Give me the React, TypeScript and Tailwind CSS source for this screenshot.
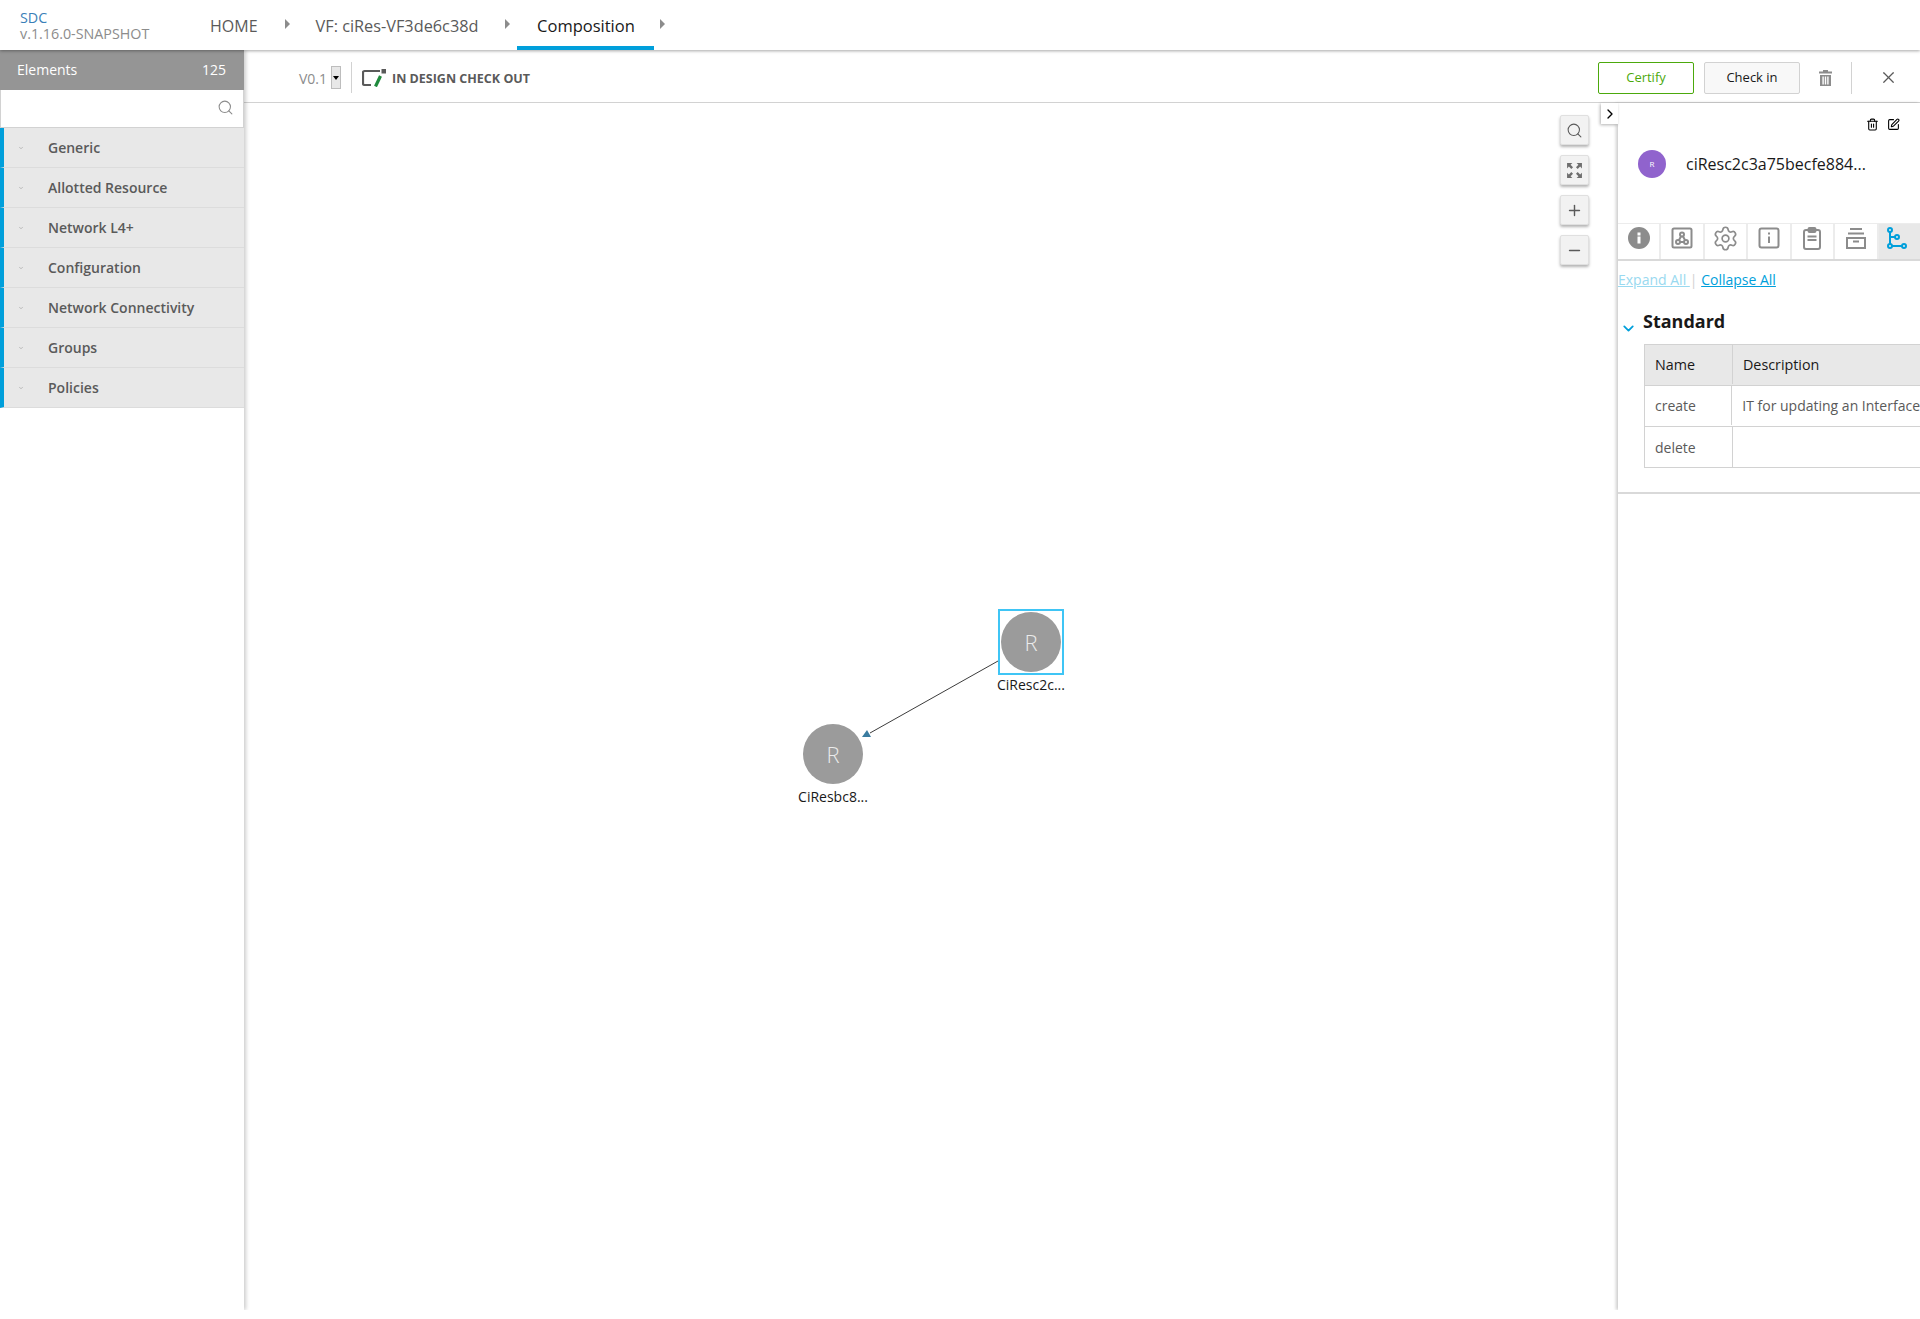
import { ChevronDown, ChevronRight, Minus, Plus, Search, Settings, SquarePen, Trash2, X } from 'lucide-react';

const categories = ['Generic', 'Allotted Resource', 'Network L4+', 'Configuration', 'Network Connectivity', 'Groups', 'Policies'];

function Crumb({ label, className }: { label: string; className: string }) {
  return (
    <div className="flex h-full items-center gap-[27px]">
      <span className={`pt-[2px] text-[#5a5a5a] ${className}`}>{label}</span>
      <span className="mb-[2px] h-0 w-0 border-y-[5px] border-l-[5px] border-y-transparent border-l-[#8c8c8c]" />
    </div>
  );
}

function ZoomButton({ children }: { children: React.ReactNode }) {
  return (
    <div className="flex h-[30px] w-[29px] items-center justify-center rounded-[2px] border border-[#e0e0e0] bg-[#f2f2f2] text-[#5a5a5a] shadow-[0_2px_3px_rgba(0,0,0,0.3)]">
      {children}
    </div>
  );
}

function Node({ label, selected }: { label: string; selected?: boolean }) {
  return (
    <div className="flex w-[80px] flex-col items-center">
      <div className={`flex h-[66px] w-[66px] items-center justify-center ${selected ? 'border-2 border-[#3fc5f5]' : ''}`}>
        <div className="flex h-[60px] w-[60px] items-center justify-center rounded-full bg-[#9b9b9b] text-[22px] font-light text-[#ebebeb]">R</div>
      </div>
      <span className="mt-[1px] whitespace-nowrap text-[14px] leading-[18px] text-[#191919]">{label}</span>
    </div>
  );
}

function TabIcon({ children, active, last }: { children: React.ReactNode; active?: boolean; last?: boolean }) {
  return (
    <div className={`flex h-full flex-1 items-start justify-center pt-[3px] ${last ? '' : 'border-r-2 border-[#ececec]'} ${active ? 'bg-[#e8e8e8] text-[#009fdb]' : 'text-[#8c8c8c]'}`}>
      {children}
    </div>
  );
}

export default function App() {
  return (
    <div className="flex h-[1310px] w-full flex-col overflow-hidden bg-white font-['Open_Sans',sans-serif]">
      {/* Top nav */}
      <div className="relative z-20 flex h-[50px] shrink-0 items-stretch bg-white shadow-[0_1px_3px_rgba(0,0,0,0.35)]">
        <div className="w-[210px] pl-[20px] pt-[10px] text-[14.3px] leading-[16px]">
          <div className="text-[#3a7fb8]">SDC</div>
          <div className="text-[#8c8c8c]">v.1.16.0-SNAPSHOT</div>
        </div>
        <div className="flex items-center gap-[26px]">
          <Crumb label="HOME" className="text-[16px]" />
          <Crumb label="VF: ciRes-VF3de6c38d" className="text-[16.3px]" />
        </div>
        <div className="relative ml-[7px] flex items-center">
          <div className="flex h-full w-[137px] items-center justify-center border-b-4 border-[#009fdb] pt-[6px] text-[16.5px] font-medium text-[#191919]">Composition</div>
          <span className="mb-[2px] ml-[6px] h-0 w-0 border-y-[5px] border-l-[5px] border-y-transparent border-l-[#8c8c8c]" />
        </div>
      </div>

      <div className="flex min-h-0 flex-1">
        {/* Elements sidebar */}
        <div className="relative z-10 w-[244px] shrink-0 bg-white shadow-[2px_0_4px_rgba(0,0,0,0.2)]">
          <div className="flex h-[40px] items-center justify-between bg-[#959595] pb-[2px] pl-[17px] pr-[18px] text-[14px] font-medium text-white">
            <span>Elements</span>
            <span>125</span>
          </div>
          <div className="flex h-[38px] items-center justify-end border border-t-0 border-[#d2d2d2] bg-white pb-[2px] pr-[9px]">
            <Search size={17} strokeWidth={1.5} className="text-[#8c8c8c]" />
          </div>
          {categories.map((name) => (
            <div key={name} className="flex h-[40px] items-center border-b border-l-4 border-b-[#dcdcdc] border-l-[#009fdb] bg-[#e8e8e8]">
              <ChevronDown size={6} strokeWidth={2} className="ml-[14px] text-[#8c8c8c]" />
              <span className="ml-[24px] text-[14px] font-semibold text-[#5a5a5a]">{name}</span>
            </div>
          ))}
        </div>

        <div className="flex min-w-0 flex-1 flex-col">
          {/* Version toolbar */}
          <div className="flex h-[53px] shrink-0 items-center border-b border-[#d2d2d2] bg-white pl-[55px] pr-[22px] pt-[3px]">
            <span className="mt-[2px] text-[14px] text-[#8c8c8c]">V0.1</span>
            <div className="ml-[4px] flex h-[23px] w-[10px] items-center justify-center border border-[#bdbdbd] bg-[#e8e8e8]">
              <span className="h-0 w-0 border-x-[3px] border-t-[4px] border-x-transparent border-t-black" />
            </div>
            <div className="ml-[10px] h-[31px] w-px bg-[#d2d2d2]" />
            <svg width="24" height="18" viewBox="0 0 24 18" className="ml-[10px] mt-[1px]" fill="none">
              <path d="M18 2H2.5A1.5 1.5 0 0 0 1 3.5v11A1.5 1.5 0 0 0 2.5 16H9" stroke="#5a5a5a" strokeWidth="2.2" />
              <rect x="19.5" y="0" width="4.5" height="4.5" fill="#5a5a5a" />
              <path d="M18.5 7 13.5 17.5" stroke="#1f8a3d" strokeWidth="3.2" />
            </svg>
            <span className="ml-[6px] mt-[3px] text-[12.5px] font-bold text-[#5a5a5a]">IN DESIGN CHECK OUT</span>
            <div className="flex-1" />
            <button className="h-[32px] w-[96px] rounded-[2px] border-[1.5px] border-[#4ca90c] bg-white text-[13px] font-medium text-[#4ca90c]">Certify</button>
            <button className="ml-[10px] h-[32px] w-[96px] rounded-[2px] border border-[#d2d2d2] bg-[#f8f8f8] text-[13px] font-medium text-[#191919]">Check in</button>
            <svg width="13" height="16" viewBox="0 0 13 16" className="ml-[19px]" fill="#8c8c8c">
              <path d="M4 0h5v1.5h4V3.5H0V1.5h4zM1 5h11v11H1zM3.4 6.5v8h1.4v-8zM5.8 6.5v8h1.4v-8zM8.2 6.5v8h1.4v-8z" fillRule="evenodd" />
            </svg>
            <div className="ml-[19px] h-[32px] w-px bg-[#d2d2d2]" />
            <X size={19} className="ml-[27px] text-[#5a5a5a]" strokeWidth={1.5} />
          </div>

          <div className="flex min-h-0 flex-1">
            {/* Composition canvas */}
            <div className="relative min-w-0 flex-1">
              <svg className="absolute inset-0 h-full w-full">
                <line x1="754" y1="558" x2="626" y2="630" stroke="#3c3c3c" strokeWidth="1" />
                <path d="M618 634 L627 634 L623 627 Z" fill="#3a7ca0" />
              </svg>
              <div className="absolute left-[747px] top-[506px]">
                <Node label="CiResc2c..." selected />
              </div>
              <div className="absolute left-[549px] top-[618px]">
                <Node label="CiResbc8..." />
              </div>
              <div className="absolute right-[29px] top-[12px] flex flex-col gap-[10px]">
                <ZoomButton>
                  <Search size={17} strokeWidth={1.5} />
                </ZoomButton>
                <ZoomButton>
                  <svg width="17" height="17" viewBox="0 0 16 16" fill="#6e6e6e">
                    <path d="M1 1h5L4.3 2.7 6.6 5 5 6.6 2.7 4.3 1 6zM15 1v5l-1.7-1.7L11 6.6 9.4 5l2.3-2.3L10 1zM1 15v-5l1.7 1.7L5 9.4 6.6 11l-2.3 2.3L6 15zM15 15h-5l1.7-1.7L9.4 11 11 9.4l2.3 2.3L15 10z" />
                  </svg>
                </ZoomButton>
                <ZoomButton>
                  <Plus size={17} strokeWidth={2} />
                </ZoomButton>
                <ZoomButton>
                  <Minus size={17} strokeWidth={2} />
                </ZoomButton>
              </div>
              <div className="absolute right-0 top-0 flex h-[21px] w-[17px] items-center justify-center bg-white shadow-[-1px_1px_3px_rgba(0,0,0,0.3)]">
                <ChevronRight size={16} strokeWidth={2} className="text-black" />
              </div>
            </div>

            {/* Details panel */}
            <div className="w-[302px] shrink-0 bg-white shadow-[-2px_0_3px_rgba(0,0,0,0.2)]">
              <div className="h-[120px]">
                <div className="flex justify-end gap-[8px] pr-[20px] pt-[15px] text-black">
                  <Trash2 size={13} strokeWidth={2} />
                  <SquarePen size={13} strokeWidth={2} />
                </div>
                <div className="mt-[19px] flex items-center pl-[20px]">
                  <div className="flex h-[28px] w-[28px] items-center justify-center rounded-full bg-[#9063cd] text-[8px] text-white">R</div>
                  <span className="ml-[20px] text-[16px] text-[#191919]">ciResc2c3a75becfe884...</span>
                </div>
              </div>
              <div className="flex h-[38px] border-b-2 border-t border-b-[#d9d9d9] border-t-[#ececec]">
                <TabIcon>
                  <svg width="22" height="22" viewBox="0 0 22 22">
                    <circle cx="11" cy="11" r="11" fill="#8c8c8c" />
                    <rect x="9.5" y="9.5" width="3" height="7" fill="#fff" />
                    <rect x="9.5" y="5.5" width="3" height="3" fill="#fff" />
                  </svg>
                </TabIcon>
                <TabIcon>
                  <svg width="22" height="22" viewBox="0 0 22 22" fill="none" stroke="currentColor" strokeWidth="2">
                    <rect x="1.5" y="1.5" width="19" height="19" rx="1.5" />
                    <circle cx="11" cy="7.5" r="2" />
                    <circle cx="7" cy="15" r="2" />
                    <circle cx="15" cy="15" r="2" />
                    <path d="M10 9.5 8 13M12 9.5l2 3.5M9 15h4" />
                  </svg>
                </TabIcon>
                <TabIcon>
                  <Settings size={27} strokeWidth={1.5} className="-mt-[2px]" />
                </TabIcon>
                <TabIcon>
                  <svg width="22" height="22" viewBox="0 0 22 22" fill="none" stroke="currentColor" strokeWidth="2">
                    <rect x="1.5" y="1.5" width="19" height="19" rx="2" />
                    <path d="M11 9.5v6.5M11 5.5v2" />
                  </svg>
                </TabIcon>
                <TabIcon>
                  <svg width="18" height="23" viewBox="0 0 18 23" fill="none" stroke="currentColor" strokeWidth="2">
                    <rect x="1" y="3" width="16" height="19" rx="2" />
                    <rect x="5.5" y="1" width="7" height="4" rx="1" />
                    <path d="M4.5 9.5h9M4.5 13h9" />
                  </svg>
                </TabIcon>
                <TabIcon>
                  <svg width="20" height="22" viewBox="0 0 20 22" fill="none" stroke="currentColor" strokeWidth="2">
                    <path d="M4 2h12M2 6.5h16M1 11h18v10H1zM7 14.5h6" />
                  </svg>
                </TabIcon>
                <TabIcon active last>
                  <svg width="20" height="22" viewBox="0 0 20 22" className="-ml-[5px]" fill="none" stroke="currentColor" strokeWidth="2">
                    <circle cx="3" cy="3" r="2" />
                    <circle cx="3" cy="19" r="2" />
                    <circle cx="10" cy="10" r="2" />
                    <circle cx="17" cy="19" r="2" />
                    <path d="M3 5v12M5 19h10M3.5 10H8" />
                  </svg>
                </TabIcon>
              </div>

              <div className="pt-[9px] text-[14px] leading-[19px]">
                <span className="text-[#99d9f0] underline">Expand All </span>
                <span className="text-[#d2d2d2]"> | </span>
                <span className="text-[#009fdb] underline">Collapse All</span>
              </div>

              <div className="flex items-start pl-[2px] pt-[20px]">
                <ChevronDown size={17} strokeWidth={2.5} className="mt-[11px] text-[#009fdb]" />
                <span className="ml-[6px] text-[18px] font-bold leading-[25px] text-[#191919]">Standard</span>
              </div>

              <div className="ml-[26px] mt-[7px] overflow-hidden border border-r-0 border-[#d2d2d2] text-[14px]">
                <div className="flex h-[40px] items-center bg-[#e8e8e8] pb-[1px] text-[14.3px] font-medium text-[#191919]">
                  <div className="flex h-full w-[88px] items-center border-r border-[#d2d2d2] pl-[10px]">Name</div>
                  <div className="pl-[10px]">Description</div>
                </div>
                <div className="flex h-[41px] items-center border-t border-[#d2d2d2] pb-[1px] text-[#5a5a5a]">
                  <div className="flex h-full w-[88px] items-center border-r border-[#d2d2d2] pl-[10px]">create</div>
                  <div className="whitespace-nowrap pl-[10px]">IT for updating an Interface</div>
                </div>
                <div className="flex h-[41px] items-center border-t border-[#d2d2d2] text-[#5a5a5a]">
                  <div className="flex h-full w-[88px] items-center border-r border-[#d2d2d2] pl-[10px]">delete</div>
                </div>
              </div>
              <div className="mt-[24px] border-b-2 border-[#d9d9d9]" />
            </div>
          </div>
        </div>
      </div>
    </div>
  );
}
